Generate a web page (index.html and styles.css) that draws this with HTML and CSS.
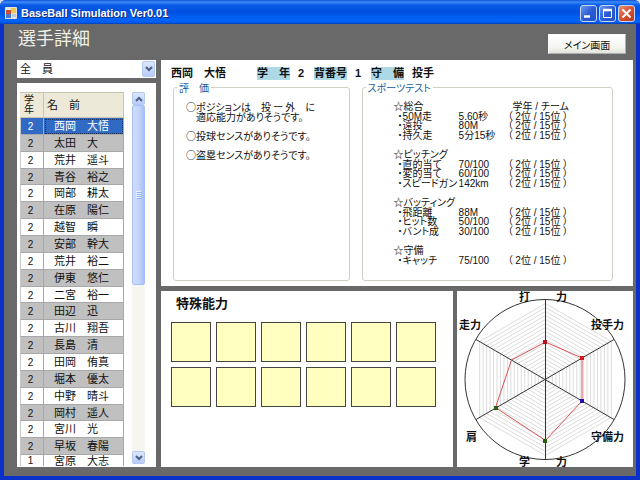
FILE: index.html
```html
<!DOCTYPE html>
<html lang="ja">
<head>
<meta charset="utf-8">
<title>BaseBall Simulation Ver0.01</title>
<link rel="stylesheet" href="styles.css">
</head>
<body>
<div class="window">
  <header class="titlebar">
    <svg class="app-icon" width="12" height="12" viewBox="0 0 12 12" aria-hidden="true">
      <rect width="12" height="12" rx="1" fill="#e8e4d8"/>
      <rect x="1" y="3" width="5" height="4" fill="#c8503c"/>
      <rect x="6" y="1" width="5" height="5" fill="#f0c850"/>
      <rect x="1" y="7" width="5" height="4" fill="#4a78d0"/>
      <rect x="7" y="7" width="4" height="3" fill="#b8c8e8"/>
    </svg>
    <span class="caption">BaseBall Simulation Ver0.01</span>
    <button class="win-btn" type="button" aria-label="最小化"><svg width="15" height="15" viewBox="0 0 15 15"><path d="M3 10.5h6" stroke="#fff" stroke-width="2.4"/></svg></button>
    <button class="win-btn" type="button" aria-label="最大化"><svg width="15" height="15" viewBox="0 0 15 15"><path d="M3.5 4v7.500h8V4M3 4h9" fill="none" stroke="#fff"/><path d="M3 4h9" stroke="#fff" stroke-width="2.400"/></svg></button>
    <button class="win-btn close" type="button" aria-label="閉じる"><svg width="15" height="15" viewBox="0 0 15 15"><path d="M3.500 3.500l8 8M11.500 3.500l-8 8" stroke="#fff" stroke-width="2"/></svg></button>
  </header>

  <div class="client">
    <div class="heading">
      <h1>選手詳細</h1>
      <button class="main-btn" type="button">メイン画面</button>
    </div>

    <main class="content">
      <aside class="sidebar">
        <div class="filter">
          <select aria-label="学年の絞り込み"><option>全　員</option></select>
          <span class="arrow-box filter-arrow"><svg width="8" height="6" viewBox="0 0 8 6"><path d="M1 1l3 3 3-3" fill="none" stroke="#4d6185" stroke-width="2"/></svg></span>
        </div>
        <div class="list">
          <div class="list-view">
            <table class="players">
              <thead><tr><th class="grade">学<br>年</th><th class="name">名　前</th></tr></thead>
              <tbody>
                <tr class="selected"><td>2</td><td>西岡　大悟</td></tr>
                <tr><td>2</td><td>太田　大</td></tr>
                <tr><td>2</td><td>荒井　遥斗</td></tr>
                <tr><td>2</td><td>青谷　裕之</td></tr>
                <tr><td>2</td><td>岡部　耕太</td></tr>
                <tr><td>2</td><td>在原　陽仁</td></tr>
                <tr><td>2</td><td>越智　瞬</td></tr>
                <tr><td>2</td><td>安部　幹大</td></tr>
                <tr><td>2</td><td>荒井　裕二</td></tr>
                <tr><td>2</td><td>伊東　悠仁</td></tr>
                <tr><td>2</td><td>二宮　裕一</td></tr>
                <tr><td>2</td><td>田辺　迅</td></tr>
                <tr><td>2</td><td>古川　翔吾</td></tr>
                <tr><td>2</td><td>長島　清</td></tr>
                <tr><td>2</td><td>田岡　侑真</td></tr>
                <tr><td>2</td><td>堀本　優太</td></tr>
                <tr><td>2</td><td>中野　晴斗</td></tr>
                <tr><td>2</td><td>岡村　遥人</td></tr>
                <tr><td>2</td><td>宮川　光</td></tr>
                <tr><td>2</td><td>早坂　春陽</td></tr>
                <tr><td>1</td><td>宮原　大志</td></tr>
              </tbody>
            </table>
          </div>
          <div class="scrollbar">
            <span class="arrow-box"><svg width="8" height="6" viewBox="0 0 8 6"><path d="M1 5l3-3 3 3" fill="none" stroke="#4d6185" stroke-width="2"/></svg></span>
            <div class="track"><div class="thumb"><svg width="6" height="8" viewBox="0 0 6 8"><path d="M0 .5h5M0 2.500h5M0 4.500h5M0 6.500h5" stroke="#eef4fe"/><path d="M1 1.500h5M1 3.500h5M1 5.500h5M1 7.500h5" stroke="#8cb0f8"/></svg></div></div>
            <span class="arrow-box"><svg width="8" height="6" viewBox="0 0 8 6"><path d="M1 1l3 3 3-3" fill="none" stroke="#4d6185" stroke-width="2"/></svg></span>
          </div>
        </div>
      </aside>

      <div class="detail">
        <section class="panel profile">
          <div class="summary">
            <span class="player">西岡　大悟</span>
            <span class="tag">学　年</span><span class="value">2</span>
            <span class="tag">背番号</span><span class="value">1</span>
            <span class="tag">守　備</span><span class="value">投手</span>
          </div>
          <div class="groups">
            <fieldset>
              <legend>評　価</legend>
              <div class="review">
                <p>○ポジションは　投 ー 外　に<br>　適応能力がありそうです。</p>
                <p>○投球センスがありそうです。</p>
                <p>○盗塁センスがありそうです。</p>
              </div>
            </fieldset>
            <fieldset>
              <legend>スポーツテスト</legend>
              <table class="tests">
                <tr><th>☆総合</th><td></td><td class="rank-head">学年 / チーム</td></tr>
                <tr><td>・50M走</td><td>5.60秒</td><td>（ 2位 / 15位 ）</td></tr>
                <tr><td>・遠投</td><td>80M</td><td>（ 2位 / 15位 ）</td></tr>
                <tr><td>・持久走</td><td>5分15秒</td><td>（ 2位 / 15位 ）</td></tr>
                <tr><td colspan="3">&nbsp;</td></tr>
                <tr><th colspan="3">☆ピッチング</th></tr>
                <tr><td>・直的当て</td><td>70/100</td><td>（ 2位 / 15位 ）</td></tr>
                <tr><td>・変的当て</td><td>60/100</td><td>（ 2位 / 15位 ）</td></tr>
                <tr><td>・スピードガン</td><td>142km</td><td>（ 2位 / 15位 ）</td></tr>
                <tr><td colspan="3">&nbsp;</td></tr>
                <tr><th colspan="3">☆バッティング</th></tr>
                <tr><td>・飛距離</td><td>88M</td><td>（ 2位 / 15位 ）</td></tr>
                <tr><td>・ヒット数</td><td>50/100</td><td>（ 2位 / 15位 ）</td></tr>
                <tr><td>・バント成</td><td>30/100</td><td>（ 2位 / 15位 ）</td></tr>
                <tr><td colspan="3">&nbsp;</td></tr>
                <tr><th colspan="3">☆守備</th></tr>
                <tr><td>・キャッチ</td><td>75/100</td><td>（ 2位 / 15位 ）</td></tr>
              </table>
            </fieldset>
          </div>
        </section>

        <div class="lower">
          <section class="panel skills">
            <h2>特殊能力</h2>
            <div class="slots">
              <div></div><div></div><div></div><div></div><div></div><div></div>
              <div></div><div></div><div></div><div></div><div></div><div></div>
            </div>
          </section>
          <section class="panel radar">
            <svg viewBox="0 0 176 176" role="img" aria-label="能力グラフ">
              <g id="rings" fill="none" stroke="#dcdcdc" stroke-width="1"></g>
              <g fill="none" stroke="#333" stroke-width="1">
                <circle cx="88" cy="88.500" r="80"/>
                <path d="M88.500 8.500v160M19 48.500l138 80M157 48.500l-138 80"/>
              </g>
              <path d="M88.500 51L125 67v43L88.500 149.500 38.500 116.500 54.500 69z" fill="none" stroke="#dc5050"/>
              <path d="M86 49h4v4h-4z" fill="#b01020"/>
              <path d="M123 65h4v4h-4z" fill="#d81818"/>
              <path d="M123 108h4v4h-4z" fill="#2010b0"/>
              <path d="M86 148h4v4h-4zM37 115h4v4h-4z" fill="#286010"/>
              <g class="axis">
                <text x="62" y="10">打</text><text x="99" y="10">力</text>
                <text x="2" y="38">走力</text><text x="134" y="38">投手力</text>
                <text x="9" y="150">肩</text><text x="134" y="150">守備力</text>
                <text x="62" y="175">学</text><text x="99" y="175">力</text>
              </g>
            </svg>
          </section>
        </div>
      </div>
    </main>
  </div>
</div>
<script src="script.js"></script>
</body>
</html>
```
FILE: styles.css
```css
* { box-sizing: border-box; }

body {
  margin: 0;
  background: #d8dce8;
  color: #111;
  font-family: "Liberation Sans", "Noto Sans CJK JP", sans-serif;
  font-size: 10px;
}

button { padding: 0; font-family: inherit; }
h1, h2, p { margin: 0; }

.window {
  display: flex;
  flex-direction: column;
  height: 100vh;
  border-radius: 6px 6px 0 0;
  overflow: hidden;
  background: #0a32c8;
}

/* Title bar */
.titlebar {
  display: flex;
  align-items: center;
  gap: 2px;
  height: 24px;
  flex: none;
  padding: 2px 5px 0;
  background: linear-gradient(#0a50d8 0, #3c8cf8 2px, #0a5ae8 5px, #0050e0 12px, #0062fa 19px, #0060f4 22px, #0040b8 24px);
}
.caption {
  flex: 1;
  padding-left: 2px;
  color: #fff;
  font-size: 11px;
  font-weight: bold;
  text-shadow: 1px 1px 0 #0a2a80;
}
.win-btn {
  display: grid;
  place-items: center;
  width: 17px;
  height: 17px;
  border: 1px solid #c8d8f8;
  border-radius: 3px;
  background: linear-gradient(135deg, #6c98f0, #2a5cd8 50%, #2450c0);
}
.win-btn.close { background: linear-gradient(135deg, #e89078, #d85030 50%, #b83818); }

/* Client area */
.client {
  display: flex;
  flex-direction: column;
  flex: 1;
  min-height: 0;
  margin: 0 4px 4px;
  padding: 0 3px 9px 13px;
  background: #696969;
}
.heading {
  display: flex;
  justify-content: space-between;
  align-items: flex-start;
  height: 36px;
  flex: none;
  padding: 3px 7px 0 1px;
}
h1 {
  color: #f0f0e8;
  font-size: 18px;
  font-weight: 400;
  line-height: 24px;
}
.main-btn {
  width: 78px;
  height: 20px;
  margin-top: 7px;
  border: 1px solid #f8f8f8;
  border-right-color: #a8b0b0;
  border-bottom-color: #a8b0b0;
  background: linear-gradient(#fff, #f4f4f0 70%, #e4e4dc);
  color: #111;
  font-size: 10px;
  font-feature-settings: "palt";
}

.content {
  display: flex;
  gap: 5px;
  flex: 1;
  min-height: 0;
}
.panel { background: #fff; }

/* Player list */
.sidebar {
  display: flex;
  flex-direction: column;
  gap: 5px;
  width: 139px;
  flex: none;
}
.filter { position: relative; height: 18px; flex: none; }
.filter select {
  appearance: none;
  display: block;
  width: 100%;
  height: 100%;
  padding: 0 3px;
  border: 0;
  border-radius: 0;
  background: #fff;
  color: #111;
  font-family: inherit;
  font-size: 11px;
}
.filter .filter-arrow {
  position: absolute;
  top: 1px;
  right: 1px;
  bottom: 1px;
  height: auto;
  pointer-events: none;
}
.arrow-box {
  display: grid;
  place-items: center;
  width: 13px;
  height: 13px;
  flex: none;
  border: 1px solid #b4c8f4;
  border-radius: 2px;
  background: linear-gradient(#dce8fe, #b8ccf8);
}
.list {
  display: flex;
  justify-content: space-between;
  flex: 1;
  min-height: 0;
  padding: 9px 11px 1px 3px;
  background: #fff;
}
.list-view { overflow: hidden; width: 104px; }
.players {
  width: 100%;
  height: 378px;
  border-collapse: separate;
  border-spacing: 0;
  table-layout: fixed;
  font-size: 11px;
  line-height: 14px;
}
.players th {
  height: 26px;
  padding: 0;
  border-top: 1px solid #c8c4b0;
  border-right: 1px solid #c8c4b0;
  border-bottom: 1px solid #c8c4b0;
  background: #ece9d8;
  font-weight: normal;
  text-align: left;
}
.players .grade { width: 24px; padding-left: 4px; font-size: 10px; line-height: 10px; }
.players .name { padding-left: 3px; }
.players td {
  padding: 0 0 0 10px;
  border-right: 1px solid #a8a8a8;
  border-bottom: 1px solid #a8a8a8;
  white-space: nowrap;
}
.players td:first-child { padding: 2px 3px 0 0; text-align: center; font-size: 10px; line-height: 12px; border-left: 1px solid #c8c8c8; }
.players tbody tr:nth-child(even) { background: #c0c0c0; }
.players tbody tr:last-child td { padding-top: 0; line-height: 12px; vertical-align: top; }
.players .selected { background: #316ac5; color: #fff; }
.players .selected td:last-child { outline: 1px dotted #18305c; outline-offset: -2px; }

.scrollbar {
  display: flex;
  flex-direction: column;
  width: 13px;
  margin-bottom: 2px;
  background: #f6f5f0;
}
.track { flex: 1; min-height: 0; }
.thumb {
  display: grid;
  place-items: center;
  height: 52%;
  border: 1px solid #a8c0f4;
  border-radius: 2px;
  background: linear-gradient(90deg, #d0defe, #c0d2fc 60%, #a8c0f4);
}

/* Detail area */
.detail {
  display: flex;
  flex-direction: column;
  gap: 5px;
  flex: 1;
  min-width: 0;
}
.profile { flex: 1; padding: 7px 20px 5px 10px; display: flex; flex-direction: column; }
.summary {
  display: flex;
  align-items: center;
  font-size: 11px;
  font-weight: bold;
  line-height: 13px;
}
.player { margin-right: 31px; }
.tag { background: #add8e6; }
.value { min-width: 24px; padding-left: 8px; }
.value:last-child { min-width: 0; }

.groups {
  display: grid;
  grid-template-columns: 177fr 252fr;
  gap: 12px;
  flex: 1;
  padding: 0 0 0 2px;
}
fieldset {
  min-width: 0;
  margin: 0;
  padding: 7px 0 0;
  border: 1px solid #d0d0c4;
  border-radius: 3px;
}
legend {
  margin-left: 3px;
  padding: 2px 2px 0;
  color: #1c5a9c;
  font-size: 10px;
  line-height: 13px;
  font-feature-settings: "palt";
}
.review {
  display: grid;
  gap: 9px;
  padding-left: 12px;
  font-family: "Noto Sans CJK JP", sans-serif;
  line-height: 10px;
  white-space: nowrap;
  font-feature-settings: "palt";
}
.tests {
  width: 182px;
  height: 163px;
  margin-left: 31px;
  border-collapse: collapse;
  table-layout: fixed;
  line-height: 9px;
  white-space: nowrap;
  font-feature-settings: "palt";
}
.tests th { padding: 0; font-weight: normal; text-align: left; }
.tests td { padding: 0; }
.tests td:first-child { padding-left: 4px; }
.tests tr:first-child th { width: 65px; }
.tests tr:first-child td { width: 49px; }
.tests tr:first-child .rank-head { width: 68px; padding-left: 5px; }

.lower { display: flex; gap: 4px; flex: none; }
.skills { flex: 1; padding: 3px 10px; }
h2 {
  padding-left: 5px;
  font-size: 13px;
  line-height: 20px;
}
.slots {
  display: grid;
  grid-template-columns: repeat(6, 40px);
  gap: 5px;
  padding-top: 8px;
}
.slots div { height: 40px; border: 1px solid #444; background: #ffffc0; }

.radar { width: 176px; }
.radar svg { display: block; width: 100%; }
.axis { font-size: 11px; font-weight: bold; fill: #111; }
```
FILE: script.js
```js
// Draws the concentric hexagon scale behind the ability chart.
const rings = document.getElementById("rings");
for (let r = 4; r <= 76; r += 4) {
  const points = [];
  for (let i = 0; i < 6; i++) {
    const a = (Math.PI / 3) * i - Math.PI / 2;
    points.push(`${88.5 + r * Math.cos(a)},${88.5 + r * Math.sin(a)}`);
  }
  const hexagon = document.createElementNS("http://www.w3.org/2000/svg", "polygon");
  hexagon.setAttribute("points", points.join(" "));
  rings.append(hexagon);
}
```
